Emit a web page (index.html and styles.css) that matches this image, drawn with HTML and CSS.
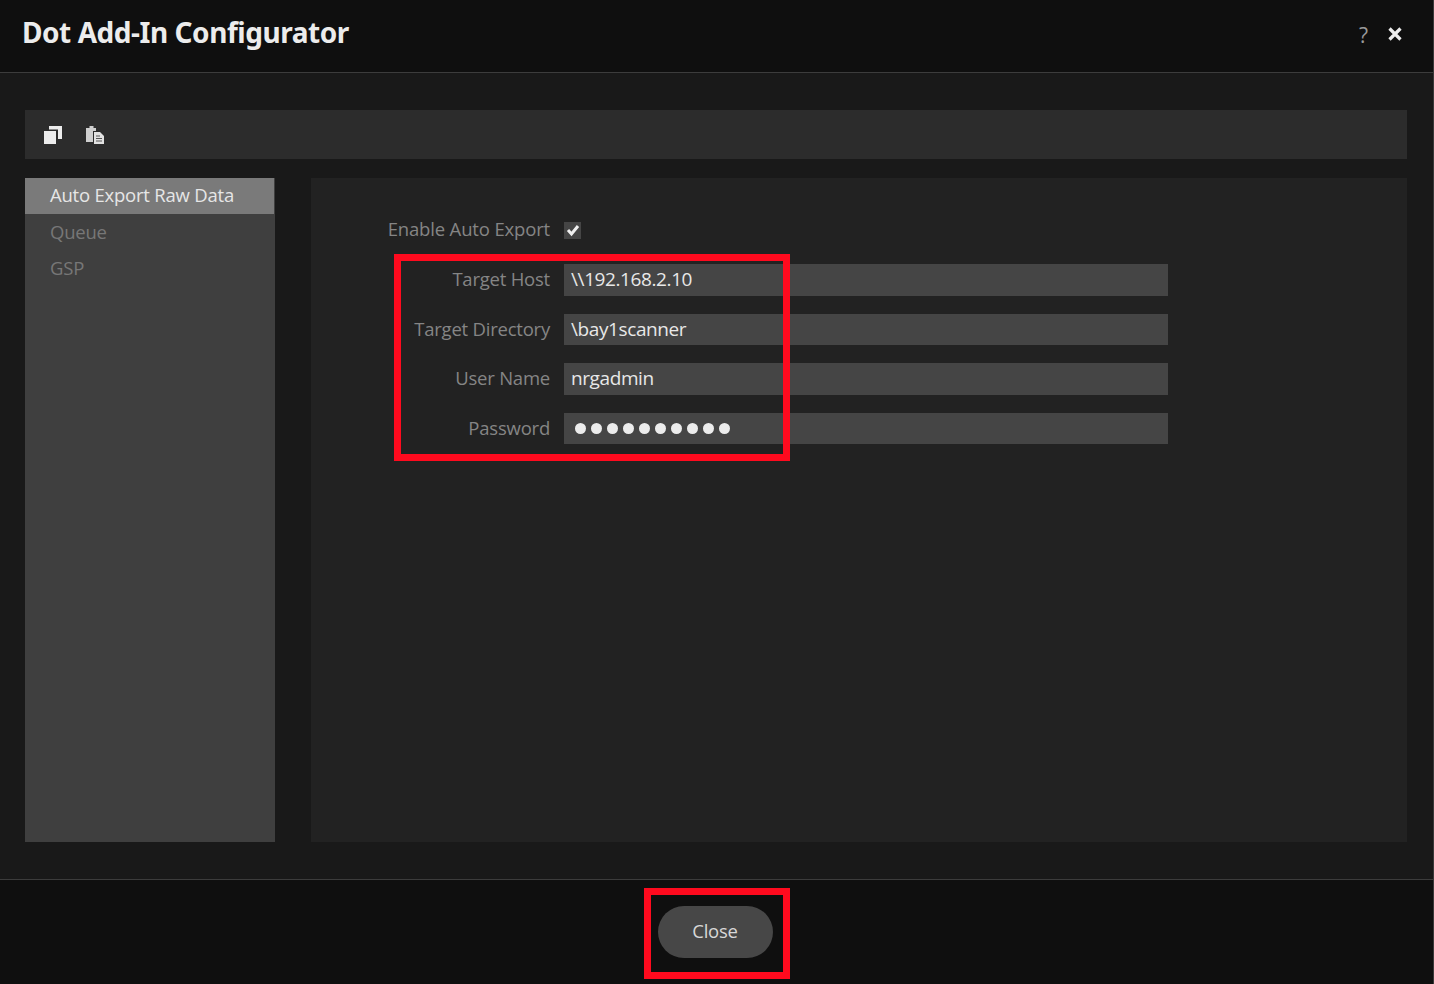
FILE: index.html
```html
<!DOCTYPE html>
<html lang="en">
<head>
  <meta charset="UTF-8" />
  <title>Dot Add-In Configurator</title>
  <link rel="stylesheet" href="styles.css">
</head>
<body>
  <div class="dialog">

    <header class="titlebar">
      <h1>Dot Add-In Configurator</h1>
      <div class="window-btns">
        <span class="help">?</span>
        <svg class="close-x" width="16" height="16" viewBox="0 0 16 16"><path d="M2.5 2.5 L13.5 13.5 M13.5 2.5 L2.5 13.5" stroke="#ececec" stroke-width="3.2" fill="none"/></svg>
      </div>
    </header>

    <main class="content">
      <div class="toolbar">
        <svg width="20" height="20" viewBox="0 0 20 20">
          <rect x="1" y="6" width="12" height="13" fill="#ececec"/>
          <path d="M6 1 H19 V14 H15 V4.5 H6 Z" fill="#ececec"/>
        </svg>
        <svg width="20" height="20" viewBox="0 0 20 20">
          <path d="M1 3 H4.500 V1 H8.500 V3 H11 V6 H8 V17 H1 Z" fill="#cfcfcf"/>
          <path d="M9 7 H15 L19 11 V19 H9 Z" fill="#e2e2e2"/>
          <path d="M11 11 H15 M11 13.500 H17 M11 16 H17" stroke="#555" stroke-width="1" fill="none"/>
        </svg>
      </div>

      <div class="columns">
        <nav class="sidebar">
          <div class="nav-item active">Auto Export Raw Data</div>
          <div class="nav-item">Queue</div>
          <div class="nav-item">GSP</div>
        </nav>

        <section class="panel">
          <div class="check-row">
            <label>Enable Auto Export</label>
            <span class="checkbox">
              <svg width="16" height="14" viewBox="0 0 16 14"><path d="M3 7 L6.500 11 L13 3" stroke="#f0f0f0" stroke-width="3" fill="none"/></svg>
            </span>
          </div>
          <div class="field-row">
            <label>Target Host</label>
            <div class="field">\\192.168.2.10</div>
          </div>
          <div class="field-row">
            <label>Target Directory</label>
            <div class="field">\bay1scanner</div>
          </div>
          <div class="field-row">
            <label>User Name</label>
            <div class="field">nrgadmin</div>
          </div>
          <div class="field-row">
            <label>Password</label>
            <div class="field dots">
              <i></i><i></i><i></i><i></i><i></i><i></i><i></i><i></i><i></i><i></i>
            </div>
          </div>
        </section>
      </div>
    </main>

    <footer class="footer">
      <button class="close-btn" type="button">Close</button>
    </footer>

    <!-- red annotation boxes drawn on top of the screenshot -->
    <div class="mark mark-fields"></div>
    <div class="mark mark-close"></div>
  </div>
</body>
</html>
```

FILE: styles.css
```css
* {
  box-sizing: border-box;
}

body, html {
  margin: 0;
  padding: 0;
  height: 100%;
  overflow: hidden;
  background: #191919;
  font-family: 'Open Sans', 'Noto Sans', sans-serif;
}

.dialog {
  position: relative;
  display: flex;
  flex-direction: column;
  height: 984px;
  border-right: 1px solid #3a3a3a;
}

.titlebar {
  height: 73px;
  flex: none;
  display: flex;
  justify-content: space-between;
  background: #0f0f0f;
  border-bottom: 1px solid #3c3c3c;
  padding: 0 30px 0 22px;
}

.titlebar h1 {
  margin: 12px 0 0;
  font-family: 'Noto Sans', sans-serif;
  font-size: 28px;
  line-height: 40px;
  font-weight: 700;
  letter-spacing: -0.45px;
  color: #ececec;
}

.window-btns {
  display: flex;
  align-items: center;
  gap: 19px;
  padding-bottom: 2px;
}

.help {
  font-size: 21px;
  color: #9a9a9a;
}

.close-x {
  margin-bottom: 2px;
}

.content {
  flex: 1;
  display: flex;
  flex-direction: column;
  gap: 19px;
  padding: 37px 26px 37px 25px;
}

.toolbar {
  height: 49px;
  flex: none;
  display: flex;
  align-items: center;
  gap: 22px;
  padding-left: 18px;
  background: #2c2c2c;
}

.columns {
  flex: 1;
  display: flex;
  gap: 36px;
}

.sidebar {
  width: 250px;
  flex: none;
  background: #3f3f3f;
}

.nav-item {
  height: 36px;
  line-height: 35px;
  padding-left: 25px;
  font-size: 18.5px;
  letter-spacing: -0.22px;
  color: #777;
}

.nav-item.active {
  width: 249px;
  line-height: 34px;
  background: #7a7a7a;
  color: #e6e6e6;
}

.panel {
  flex: 1;
  background: #222;
  padding-top: 36px;
}

.check-row, .field-row {
  display: grid;
  grid-template-columns: 239px 604px;
  column-gap: 14px;
  align-items: center;
}

.check-row {
  height: 32px;
  margin-bottom: 18px;
}

.check-row label {
  padding-bottom: 4px;
  letter-spacing: -0.16px;
}

.field-row {
  height: 31.500px;
  margin-bottom: 18px;
}

label {
  padding-bottom: 2px;
  text-align: right;
  font-size: 18.5px;
  letter-spacing: -0.22px;
  color: #858585;
}

.checkbox {
  display: flex;
  align-items: center;
  justify-content: center;
  width: 17px;
  height: 17px;
  background: #454545;
}

.field {
  height: 31.500px;
  line-height: 30px;
  padding-left: 7px;
  background: #454545;
  font-size: 19px;
  letter-spacing: -0.4px;
  color: #e8e8e8;
}

.dots {
  display: flex;
  align-items: center;
  gap: 4.500px;
  padding-left: 10.500px;
}

.dots i {
  width: 11.500px;
  height: 11.500px;
  border-radius: 50%;
  background: #ececec;
}

.footer {
  height: 105px;
  flex: none;
  display: flex;
  justify-content: center;
  padding: 26px 3px 0 0;
  background: #0f0f0f;
  border-top: 1px solid #3c3c3c;
}

.close-btn {
  width: 115px;
  height: 52px;
  padding-bottom: 5px;
  border: none;
  border-radius: 26px;
  background: #474747;
  font-family: inherit;
  font-size: 18.5px;
  letter-spacing: -0.22px;
  color: #d8d8d8;
}

.mark {
  position: absolute;
  border: 7px solid #ff0a1e;
}

.mark-fields {
  left: 394px;
  top: 254px;
  width: 396px;
  height: 207px;
}

.mark-close {
  left: 644px;
  top: 888px;
  width: 146px;
  height: 91px;
}
```
